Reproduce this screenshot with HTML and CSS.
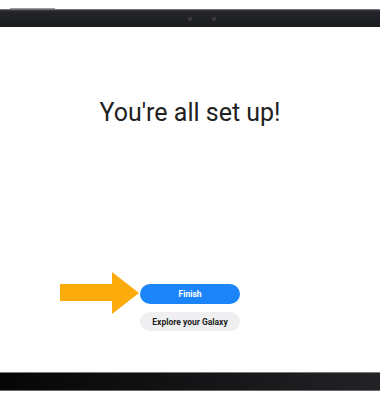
FILE: index.html
```html
<!DOCTYPE html>
<html lang="en">
<head>
    <meta charset="UTF-8">
    <meta name="viewport" content="width=device-width, initial-scale=1.0">
    <title>Setup Complete</title>
    <link rel="stylesheet" href="styles.css">
</head>
<body>
    <div class="device">
        <div class="bezel-top">
            <span class="side-key"></span>
            <span class="camera"></span>
            <span class="sensor"></span>
        </div>
        <div class="screen">
            <h1 class="title">You're all set up!</h1>
            <div class="actions">
                <svg class="pointer" width="82" height="44" viewBox="0 0 82 44">
                    <polygon points="0,12 52,12 52,0 79,21 52,42 52,29 0,29" fill="#fbab0b"/>
                </svg>
                <button class="btn btn-primary">Finish</button>
                <button class="btn btn-secondary">Explore your Galaxy</button>
            </div>
        </div>
        <div class="bezel-bottom"></div>
    </div>
</body>
</html>
```

FILE: styles.css
```css
body {
    margin: 0;
    background-color: #fff;
    font-family: Roboto, "Liberation Sans", sans-serif;
}

.device {
    width: 380px;
    padding-top: 9px;
}

.bezel-top {
    position: relative;
    height: 18px;
    background: linear-gradient(to bottom, #3a3b40 0, #24252a 2px, #1b1c20 100%);
    border-top: 1px solid #707074;
    box-sizing: border-box;
}

.side-key {
    position: absolute;
    left: 10px;
    top: -2px;
    width: 45px;
    height: 1px;
    background: #9a9a9e;
}

.camera,
.sensor {
    position: absolute;
    top: 7px;
    width: 4px;
    height: 4px;
    border-radius: 50%;
    background: #3b3c42;
}

.camera {
    left: 188px;
}

.sensor {
    left: 212px;
}

.screen {
    height: 345px;
    display: flex;
    flex-direction: column;
    align-items: center;
}

.title {
    margin: 71px 0 0;
    font-size: 25px;
    font-weight: 400;
    color: #222;
}

.actions {
    position: relative;
    margin-top: 157px;
    display: flex;
    flex-direction: column;
    align-items: center;
    gap: 8px;
}

.pointer {
    position: absolute;
    left: -80px;
    top: -12px;
}

.btn {
    width: 100px;
    height: 20px;
    border: none;
    border-radius: 10px;
    font-family: Roboto, "Liberation Sans", sans-serif;
    font-size: 8.5px;
    font-weight: 700;
    padding: 0;
}

.btn-primary {
    background-color: #1a84f8;
    color: #fff;
}

.btn-secondary {
    height: 19px;
    background-color: #efeff1;
    color: #222;
}

.bezel-bottom {
    height: 19px;
    background: linear-gradient(to right, #060607 0, #141416 50%, #232327 100%);
    border-top: 1px solid #7a7a7c;
    border-bottom: 1px solid #69696b;
    box-sizing: border-box;
}
```
